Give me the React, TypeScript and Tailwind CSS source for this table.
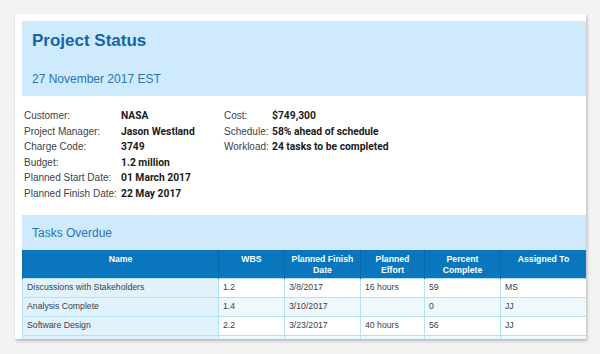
const info = [
  ["Customer:", "NASA"],
  ["Project Manager:", "Jason Westland"],
  ["Charge Code:", "3749"],
  ["Budget:", "1.2 million"],
  ["Planned Start Date:", "01 March 2017"],
  ["Planned Finish Date:", "22 May 2017"],
];

const summary = [
  ["Cost:", "$749,300"],
  ["Schedule:", "58% ahead of schedule"],
  ["Workload:", "24 tasks to be completed"],
];

const columns = [
  { label: "Name", width: "w-[196px]" },
  { label: "WBS", width: "w-[66px]" },
  { label: "Planned Finish Date", width: "w-[76px]" },
  { label: "Planned Effort", width: "w-[64px]" },
  { label: "Percent Complete", width: "w-[76px]" },
  { label: "Assigned To", width: "w-[86px]" },
];

const tasks = [
  ["Discussions with Stakeholders", "1.2", "3/8/2017", "16 hours", "59", "MS"],
  ["Analysis Complete", "1.4", "3/10/2017", "", "0", "JJ"],
  ["Software Design", "2.2", "3/23/2017", "40 hours", "56", "JJ"],
  ["", "", "", "", "", ""],
];

export default function App() {
  return (
    <div className="w-[600px] h-[354px] bg-[#f3f3f3] pt-[14px] pl-[15px] font-['Liberation_Sans',Arial,sans-serif]">
      <div className="w-[571px] h-[325px] bg-white pt-[7px] pl-[7px] overflow-hidden shadow-[1px_2px_3px_rgba(0,0,0,0.25)]">
        {/* Header band */}
        <div className="bg-[#cfeafc] h-[75px] pt-[10px] pl-[10px] flex flex-col">
          <h1 className="text-[17px] leading-[20px] font-bold text-[#1764aa]">Project Status</h1>
          <p className="mt-[20px] text-[12px] leading-[16px] text-[#2b74b3]">27 November 2017 EST</p>
        </div>

        {/* Details */}
        <div className="h-[119px] pt-[12px] pl-[2px] flex items-start text-[10px] leading-[15.5px]">
          <div className="grid grid-cols-[97px_auto] content-start w-[200px]">
            {info.map(([k, v]) => (
              <div key={k} className="contents">
                <span className="text-[#3b3f4c]">{k}</span>
                <span className="font-['Roboto',sans-serif] font-bold text-[10.3px] text-[#1b1b1b]">{v}</span>
              </div>
            ))}
          </div>
          <div className="grid grid-cols-[48px_auto] content-start">
            {summary.map(([k, v]) => (
              <div key={k} className="contents">
                <span className="text-[#3b3f4c]">{k}</span>
                <span className="font-['Roboto',sans-serif] font-bold text-[10.3px] text-[#1b1b1b]">{v}</span>
              </div>
            ))}
          </div>
        </div>

        {/* Tasks overdue band */}
        <div className="bg-[#cfeafc] h-[35px] pl-[10px] flex items-center">
          <h2 className="text-[12px] leading-[16px] text-[#2b74b3]">Tasks Overdue</h2>
        </div>

        {/* Table */}
        <table className="border-collapse table-fixed w-[564px] text-[8.7px]">
          <thead>
            <tr className="bg-[#0a76bd] h-[28px]">
              {columns.map((c) => (
                <th
                  key={c.label}
                  className={`${c.width} align-top pt-[4px] px-[6px] text-center font-bold text-white leading-[11px] border-x border-[#0868a8]`}
                >
                  {c.label}
                </th>
              ))}
            </tr>
          </thead>
          <tbody>
            {tasks.map((row, i) => (
              <tr key={i} className={`h-[19px] ${i % 2 === 1 ? "bg-[#eef8fd]" : "bg-white"}`}>
                {row.map((cell, j) => (
                  <td
                    key={j}
                    className={`px-[4px] leading-[11px] text-[#3a3d48] border border-[#b5e1f6] ${j === 0 ? "bg-[#e0f3fc]" : ""}`}
                  >
                    {cell}
                  </td>
                ))}
              </tr>
            ))}
          </tbody>
        </table>
      </div>
    </div>
  );
}
